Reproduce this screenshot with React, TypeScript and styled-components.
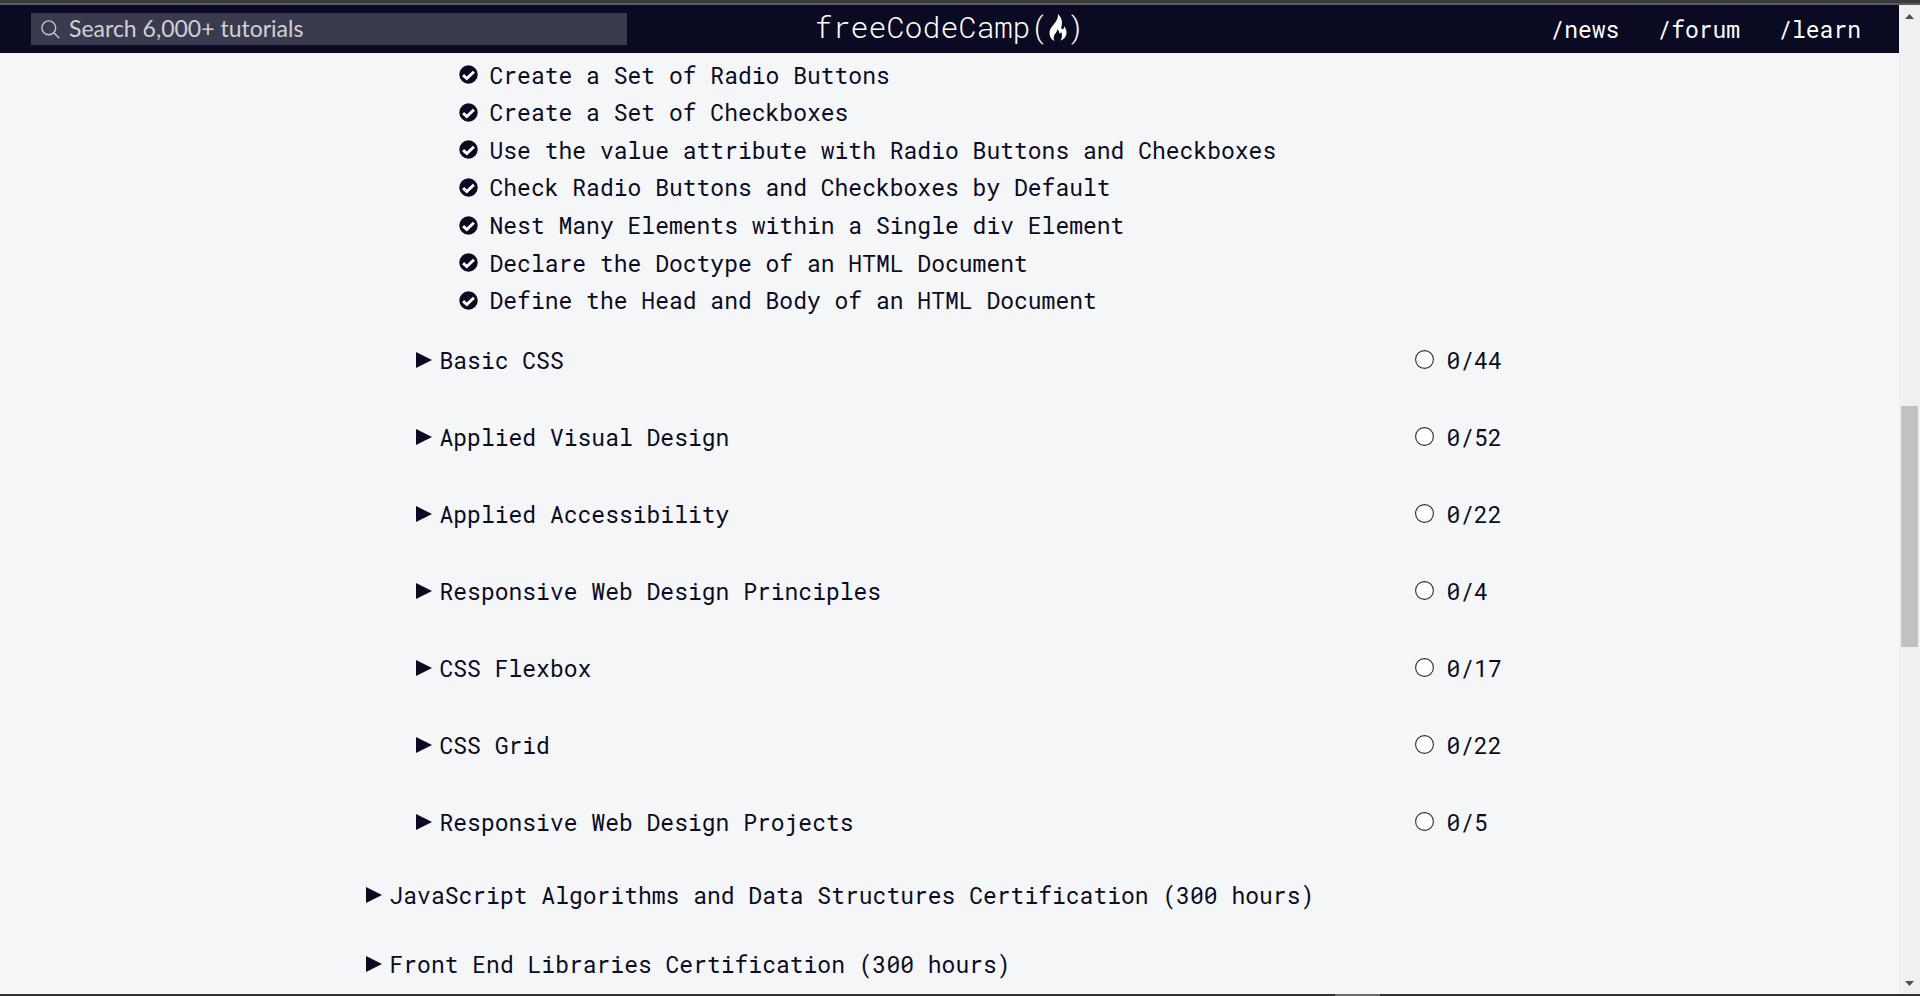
import React from 'react';
import styled, { createGlobalStyle } from 'styled-components';

const ink = '#0a0a23';
const paper = '#f5f6f7';
const mono = "'Roboto Mono', 'DejaVu Sans Mono', 'Liberation Mono', monospace";

const GlobalStyle = createGlobalStyle`
  *, *::before, *::after { box-sizing: border-box; }
  body {
    margin: 0;
    background: ${paper};
    color: ${ink};
    font-family: ${mono};
    font-size: 23px;
    font-weight: 400;
    line-height: 32px;
  }
`;

const Shell = styled.div`
  display: flex;
  flex-direction: column;
  height: 100vh;
  overflow: hidden;
  border-top: 3px solid #3b3b3a;
`;

const Viewport = styled.div`
  display: flex;
  flex: 1;
  min-height: 0;
  border-top: 2px solid #5a5a60;
`;

const Page = styled.div`
  display: flex;
  flex-direction: column;
  flex: 1;
  min-width: 0;
  overflow: hidden;
`;

const Header = styled.header`
  display: grid;
  grid-template-columns: 1fr auto 1fr;
  align-items: center;
  flex: none;
  height: 48px;
  padding: 0 31px;
  background: ${ink};
  color: #fff;
`;

const SearchBox = styled.label`
  display: flex;
  align-items: center;
  gap: 9px;
  width: 100%;
  max-width: 596px;
  height: 32px;
  padding: 0 10px;
  background: #3b3b4f;
  color: #d0d0d5;
`;

const SearchInput = styled.input`
  flex: 1;
  min-width: 0;
  padding: 0 0 2px;
  border: 0;
  outline: 0;
  background: transparent;
  color: inherit;
  font: 23px/30px Lato, sans-serif;
  &::placeholder { color: #d0d0d5; opacity: 1; }
`;

const Logo = styled.a`
  display: flex;
  align-items: center;
  padding-bottom: 4px;
  color: #fff;
  font-size: 30px;
  font-weight: 350;
  line-height: 40px;
  text-decoration: none;
`;

const Nav = styled.nav`
  display: flex;
  justify-content: flex-end;
  gap: 38px;
  padding-right: 7px;
`;

const NavLink = styled.a`
  color: #fff;
  text-decoration: none;
`;

const Main = styled.main`
  width: 100%;
  max-width: 1168px;
  margin: 0 auto;
  padding-top: 3px;
`;

const ChallengeList = styled.ul`
  display: grid;
  grid-auto-rows: 1fr;
  min-height: 263px;
  margin: 0 0 2px;
  padding: 0 0 0 93px;
  list-style: none;
`;

const Challenge = styled.li`
  display: flex;
  align-items: center;
`;

const ChallengeLink = styled.a`
  display: flex;
  align-items: center;
  gap: 12px;
  color: ${ink};
  text-decoration: none;
`;

const BlockList = styled.div`
  padding-left: 50px;
`;

const MapButton = styled.button<{ $height: number }>`
  display: flex;
  align-items: center;
  width: 100%;
  height: ${(p) => p.$height}px;
  padding: 0;
  border: 0;
  background: transparent;
  color: ${ink};
  font: inherit;
  text-align: left;
  cursor: pointer;
`;

const Title = styled.span`
  flex: 1;
  padding-left: 8px;
  white-space: nowrap;
`;

const Status = styled.span`
  display: flex;
  align-items: center;
  gap: 13px;
  width: 119px;
`;

const ScrollTrack = styled.div`
  display: flex;
  flex-direction: column;
  align-items: center;
  justify-content: space-between;
  flex: none;
  width: 21px;
  padding: 9px 0 8px;
  background: #f0f0f0;
`;

const ScrollRail = styled.div`
  display: grid;
  grid-template-rows: 387fr 241fr 334fr;
  flex: 1;
  width: 17px;
`;

const ScrollThumb = styled.div`
  grid-row: 2;
  background: #c1c1c1;
`;

const WindowEdge = styled.div`
  display: grid;
  grid-template-columns: 1335fr 45fr 540fr;
  flex: none;
  height: 2px;
  background: #323234;
`;

const EdgeHighlight = styled.div`
  grid-column: 2;
  background: #69696b;
`;

const CheckIcon = () => (
  <svg width="19" height="19" viewBox="0 0 20 20" aria-hidden="true">
    <circle cx="10" cy="10" r="9.7" fill={ink} />
    <path d="M4.3 10.7 8.2 14.3 15.7 7" fill="none" stroke="#fff" strokeWidth="3" />
  </svg>
);

const CircleIcon = () => (
  <svg width="19" height="19" viewBox="0 0 19 19" aria-hidden="true">
    <circle cx="9.5" cy="9.5" r="8.9" fill="#fff" stroke="#2b2b38" strokeWidth="1.1" />
  </svg>
);

const Caret = () => (
  <svg width="16" height="16" viewBox="0 0 16 16" aria-hidden="true">
    <path d="M0 0 16 8 0 16Z" fill={ink} />
  </svg>
);

const SearchIcon = () => (
  <svg width="19" height="19" viewBox="0 0 19 19" fill="none" stroke="#c4c4cc" strokeWidth="1.4" aria-hidden="true">
    <circle cx="7.8" cy="7.8" r="6.9" />
    <path d="m12.6 12.6 5.7 5.7" />
  </svg>
);

const Flame = () => (
  <svg width="18" height="27" viewBox="0 0 18 27" aria-hidden="true">
    <path
      d="M8.900 0C9.400 4.500 7.200 7.300 4.400 10.800 1.800 14 .3 16.300.5 19.500.7 22.900 2.300 25.400 5.400 27 4.300 24.300 4.300 22.200 6 19.900 7.300 18.200 8.300 17 8.200 15.200 9.800 16.300 10.400 17.900 10.300 19.600 11.400 19.500 12 19 12.300 18.100 13.400 21 13.200 23.900 11.600 26.700 15.300 24.900 17.500 22.300 17.500 18.700 17.500 16 16.600 14 15 12.300 15.200 13.800 14.800 15 13.600 15.300 12.400 15.400 12 14.300 12.500 12.500 13.900 7.800 12.400 3.200 8.900 0Z"
      fill="#fff"
    />
  </svg>
);

const Arrow = ({ down = false }: { down?: boolean }) => (
  <svg width="9" height="5" viewBox="0 0 9 5" aria-hidden="true">
    <path d={down ? 'M0 0H9L4.500 5Z' : 'M0 5H9L4.500 0Z'} fill="#505050" />
  </svg>
);

const challenges = [
  'Create a Set of Radio Buttons',
  'Create a Set of Checkboxes',
  'Use the value attribute with Radio Buttons and Checkboxes',
  'Check Radio Buttons and Checkboxes by Default',
  'Nest Many Elements within a Single div Element',
  'Declare the Doctype of an HTML Document',
  'Define the Head and Body of an HTML Document',
];

const blocks = [
  { title: 'Basic CSS', progress: '0/44' },
  { title: 'Applied Visual Design', progress: '0/52' },
  { title: 'Applied Accessibility', progress: '0/22' },
  { title: 'Responsive Web Design Principles', progress: '0/4' },
  { title: 'CSS Flexbox', progress: '0/17' },
  { title: 'CSS Grid', progress: '0/22' },
  { title: 'Responsive Web Design Projects', progress: '0/5' },
];

const certifications = [
  'JavaScript Algorithms and Data Structures Certification (300 hours)',
  'Front End Libraries Certification (300 hours)',
];

export default function App() {
  return (
    <Shell>
      <GlobalStyle />
      <Viewport>
        <Page>
          <Header>
            <SearchBox>
              <SearchIcon />
              <SearchInput type="text" aria-label="Search" placeholder="Search 6,000+ tutorials" />
            </SearchBox>
            <Logo href="#">
              freeCodeCamp(<Flame />)
            </Logo>
            <Nav>
              {['/news', '/forum', '/learn'].map((path) => (
                <NavLink key={path} href={path}>{path}</NavLink>
              ))}
            </Nav>
          </Header>
          <Main>
            <ChallengeList>
              {challenges.map((name) => (
                <Challenge key={name}>
                  <ChallengeLink href="#">
                    <CheckIcon />
                    {name}
                  </ChallengeLink>
                </Challenge>
              ))}
            </ChallengeList>
            <BlockList>
              {blocks.map(({ title, progress }) => (
                <MapButton key={title} type="button" $height={77}>
                  <Caret />
                  <Title>{title}</Title>
                  <Status>
                    <CircleIcon />
                    {progress}
                  </Status>
                </MapButton>
              ))}
            </BlockList>
            {certifications.map((title) => (
              <MapButton key={title} type="button" $height={69}>
                <Caret />
                <Title>{title}</Title>
              </MapButton>
            ))}
          </Main>
        </Page>
        <ScrollTrack aria-hidden="true">
          <Arrow />
          <ScrollRail>
            <ScrollThumb />
          </ScrollRail>
          <Arrow down />
        </ScrollTrack>
      </Viewport>
      <WindowEdge>
        <EdgeHighlight />
      </WindowEdge>
    </Shell>
  );
}
